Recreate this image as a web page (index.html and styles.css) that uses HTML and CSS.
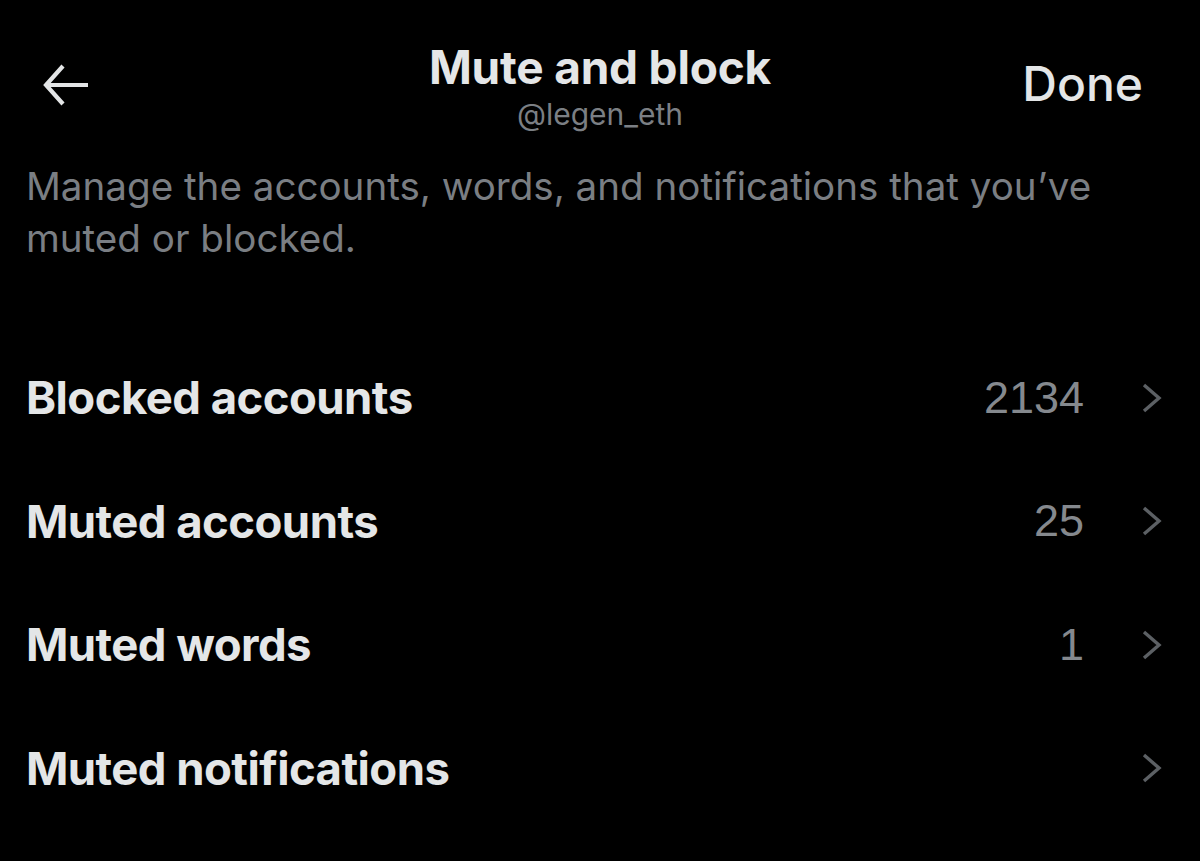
FILE: index.html
```html
<!DOCTYPE html>
<html lang="en">
<head>
<meta charset="utf-8">
<title>Mute and block</title>
<link rel="stylesheet" href="styles.css">
</head>
<body>
<div class="screen">
  <header class="header">
    <div class="back">
      <svg width="46" height="42" viewBox="0 0 46 42" fill="none" stroke="#e3e5e6" stroke-width="4.2" stroke-linecap="butt">
        <path d="M20 2 L3 21 L20 40"/>
        <path d="M3 21 H45"/>
      </svg>
    </div>
    <div class="title-block">
      <div class="title">Mute and block</div>
      <div class="handle">@legen_eth</div>
    </div>
    <div class="done">Done</div>
  </header>
  <p class="desc">Manage the accounts, words, and notifications that you’ve muted or blocked.</p>
  <ul class="list">
    <li class="row"><span class="label">Blocked accounts</span><span class="count">2134</span><span class="chev"><svg width="20" height="30" viewBox="0 0 20 30" fill="none" stroke="#5c6064" stroke-width="3.4"><path d="M2 2 L17 15 L2 28"/></svg></span></li>
    <li class="row"><span class="label">Muted accounts</span><span class="count">25</span><span class="chev"><svg width="20" height="30" viewBox="0 0 20 30" fill="none" stroke="#5c6064" stroke-width="3.4"><path d="M2 2 L17 15 L2 28"/></svg></span></li>
    <li class="row"><span class="label">Muted words</span><span class="count">1</span><span class="chev"><svg width="20" height="30" viewBox="0 0 20 30" fill="none" stroke="#5c6064" stroke-width="3.4"><path d="M2 2 L17 15 L2 28"/></svg></span></li>
    <li class="row"><span class="label">Muted notifications</span><span class="count"></span><span class="chev"><svg width="20" height="30" viewBox="0 0 20 30" fill="none" stroke="#5c6064" stroke-width="3.4"><path d="M2 2 L17 15 L2 28"/></svg></span></li>
  </ul>
</div>
</body>
</html>
```
FILE: styles.css
```css
html, body {
  margin: 0;
  padding: 0;
  background: #000;
}
.screen {
  width: 1200px;
  height: 861px;
  background: #000;
  color: #e4e6e7;
  font-family: Inter, "Noto Sans", sans-serif;
  overflow: hidden;
}
.header {
  display: grid;
  grid-template-columns: 1fr auto 1fr;
  align-items: start;
  padding: 40px 0 0 0;
  height: 120px;
}
.back {
  padding-top: 24px;
  margin-left: 43px;
  display: flex;
}
.title-block {
  display: flex;
  flex-direction: column;
  align-items: center;
}
.title {
  font-size: 46px;
  font-weight: 700;
  line-height: 54px;
  letter-spacing: -0.2px;
}
.handle {
  font-size: 30px;
  line-height: 40px;
  color: #7b7f84;
  font-weight: 400;
}
.done {
  justify-self: end;
  margin-right: 57px;
  font-size: 48px;
  font-weight: 500;
  line-height: 56px;
  padding-top: 16px;
}
.desc {
  margin: 0;
  padding: 0 40px 0 26px;
  font-size: 38.6px;
  line-height: 52px;
  color: #7a7e83;
  font-weight: 400;
}
.list {
  list-style: none;
  margin: 0;
  padding: 72px 0 0 0;
}
.row {
  display: flex;
  align-items: center;
  height: 123.5px;
  padding: 0 38px 0 26px;
}
.label {
  flex: 1;
  font-size: 45.5px;
  font-weight: 700;
  letter-spacing: -0.55px;
}
.count {
  font-family: "Liberation Sans", Arial, sans-serif;
  font-size: 45px;
  color: #85898e;
  margin-right: 58px;
}
.chev {
  display: flex;
}
```
